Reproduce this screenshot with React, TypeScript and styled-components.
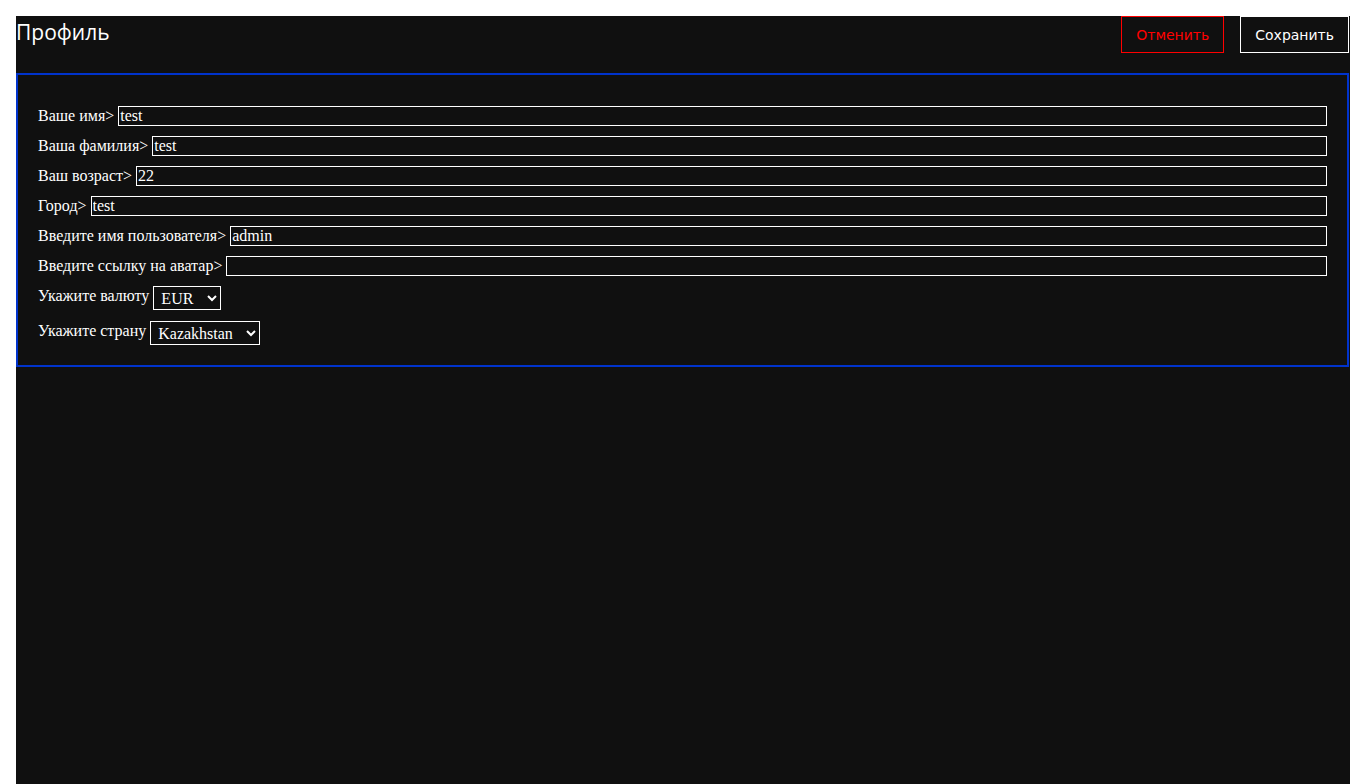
import React, { useState } from "react"
import styled, { createGlobalStyle } from "styled-components"

const GlobalStyle = createGlobalStyle`
  html, body {
    background: #ffffff;
  }
  body {
    margin: 8px 0 0 8px;
    overflow: hidden;
  }
`

// fields of the profile form
const textFields = [
  { id: "name", label: "Ваше имя>", value: "test" },
  { id: "surname", label: "Ваша фамилия>", value: "test" },
  { id: "age", label: "Ваш возраст>", value: "22" },
  { id: "city", label: "Город>", value: "test" },
  { id: "login", label: "Введите имя пользователя>", value: "admin" },
  { id: "avatar", label: "Введите ссылку на аватар>", value: "" },
]

function App() {
  const [values, setValues] = useState<Record<string, string>>(
    Object.fromEntries(textFields.map((f) => [f.id, f.value]))
  )
  const [currency, setCurrency] = useState("EUR")
  const [country, setCountry] = useState("Kazakhstan")

  return (
    <>
      <GlobalStyle />
      <Page>
        <Header>
          <Title>Профиль</Title>
          <Actions>
            <ActionButton $danger>Отменить</ActionButton>
            <ActionButton>Сохранить</ActionButton>
          </Actions>
        </Header>
        <FormBox>
          {textFields.map((f) => (
            <Row key={f.id}>
              <Label htmlFor={f.id}>{f.label}</Label>
              <TextInput
                id={f.id}
                value={values[f.id]}
                onChange={(e) => setValues({ ...values, [f.id]: e.target.value })}
              />
            </Row>
          ))}
          <SelectRow>
            <Label htmlFor="currency">Укажите валюту</Label>
            <Select id="currency" value={currency} onChange={(e) => setCurrency(e.target.value)}>
              <option>EUR</option>
              <option>USD</option>
              <option>KZT</option>
              <option>RUB</option>
            </Select>
          </SelectRow>
          <SelectRow>
            <Label htmlFor="country">Укажите страну</Label>
            <Select id="country" value={country} onChange={(e) => setCountry(e.target.value)}>
              <option>Kazakhstan</option>
              <option>Russia</option>
              <option>Germany</option>
            </Select>
          </SelectRow>
        </FormBox>
      </Page>
    </>
  )
}

export default App

const Page = styled.div`
  margin: 8px 0 0 8px;
  min-height: 780px;
  background: #101010;
  color: #ffffff;
`

const Header = styled.div`
  display: flex;
  justify-content: space-between;
  align-items: flex-start;
  margin-bottom: 20px;
`

const Title = styled.h1`
  margin: 0;
  padding-top: 1px;
  font-family: "Open Sans", "Noto Sans", sans-serif;
  font-size: 21px;
  font-weight: 400;
  line-height: 30px;
  color: #ffffff;
`

const Actions = styled.div`
  display: flex;
  gap: 16px;
  padding-right: 1px;
`

const ActionButton = styled.button<{ $danger?: boolean }>`
  height: 37px;
  padding: 0 14px;
  background: #101010;
  border: 1px solid ${(p) => (p.$danger ? "#ff0000" : "#ffffff")};
  color: ${(p) => (p.$danger ? "#ff0000" : "#ffffff")};
  font-family: "DejaVu Sans", sans-serif;
  font-size: 14px;
  cursor: pointer;
`

const FormBox = styled.div`
  margin-right: 1px;
  border: 2px solid #0033cc;
  padding: 31px 20px 20px 20px;
  display: flex;
  flex-direction: column;
`

const Row = styled.div`
  display: flex;
  align-items: flex-start;
  gap: 4px;
  margin-bottom: 10px;
`

const SelectRow = styled(Row)`
  margin-bottom: 11px;
  &:last-child {
    margin-bottom: 0;
  }
`

const Label = styled.label`
  font-family: "Liberation Serif", "Times New Roman", serif;
  font-size: 16px;
  line-height: 18px;
  white-space: nowrap;
  padding-top: 1px;
`

const TextInput = styled.input`
  flex: 1;
  height: 20px;
  box-sizing: border-box;
  padding: 0 1px;
  background: transparent;
  border: 1px solid #ffffff;
  color: #ffffff;
  font-family: "Liberation Serif", "Times New Roman", serif;
  font-size: 16px;
  outline: none;
`

const Select = styled.select`
  height: 24px;
  box-sizing: border-box;
  padding: 0 10px 0 3px;
  background: #101010;
  border: 1px solid #ffffff;
  color: #ffffff;
  color-scheme: dark;
  font-family: "Liberation Serif", "Times New Roman", serif;
  font-size: 16px;
  border-radius: 0;
  outline: none;
`
